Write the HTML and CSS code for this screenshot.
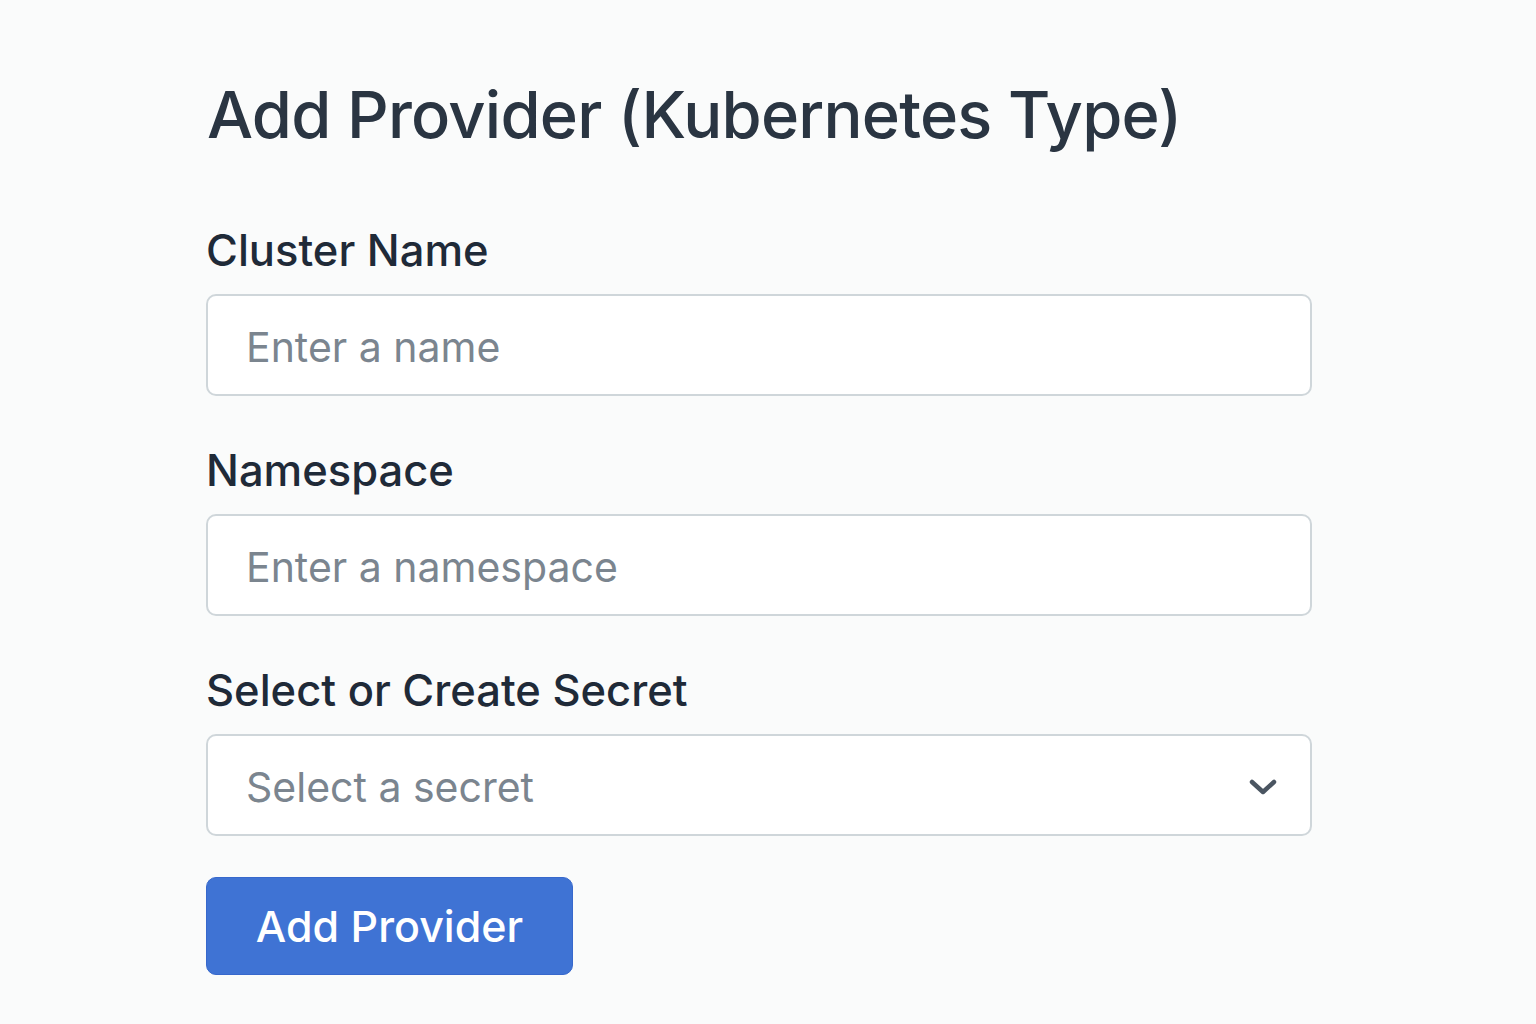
FILE: index.html
```html
<!DOCTYPE html>
<html lang="en">
<head>
<meta charset="utf-8">
<title>Add Provider</title>
<link rel="stylesheet" href="styles.css">
</head>
<body>
<main class="page">
  <h1 class="title">Add Provider (Kubernetes Type)</h1>
  <form class="form">
    <div class="field">
      <label class="label" for="cluster">Cluster Name</label>
      <input class="input" id="cluster" type="text" placeholder="Enter a name">
    </div>
    <div class="field">
      <label class="label" for="ns">Namespace</label>
      <input class="input" id="ns" type="text" placeholder="Enter a namespace">
    </div>
    <div class="field">
      <label class="label" for="secret">Select or Create Secret</label>
      <div class="select">
        <span class="select-text">Select a secret</span>
        <svg class="chevron" width="30" height="20" viewBox="0 0 30 20"><path d="M4 5 L15 15 L26 5" fill="none" stroke="#4a5561" stroke-width="4.5" stroke-linecap="round" stroke-linejoin="round"/></svg>
      </div>
    </div>
    <button class="button" type="button">Add Provider</button>
  </form>
</main>
</body>
</html>
```
FILE: styles.css
```css
* { box-sizing: border-box; }
html, body { margin: 0; padding: 0; }
body {
  background: #fafbfb;
  font-family: Inter, "Noto Sans", sans-serif;
  color: #243040;
}
.page {
  width: 1106px;
  margin-left: 206px;
  padding-top: 72px;
}
.title {
  margin: 0 0 0 1px;
  font-size: 65px;
  font-weight: 500;
  line-height: 86px;
  letter-spacing: -0.8px;
  color: #2a3542;
}
.form {
  display: flex;
  flex-direction: column;
  margin-top: 64px;
}
.field {
  display: flex;
  flex-direction: column;
  margin-bottom: 46px;
}
.field:last-of-type { margin-bottom: 41px; }
.label {
  font-size: 43.5px;
  font-weight: 500;
  line-height: 56px;
  margin: 0 0 16px 0;
  color: #1f2a38;
}
.input, .select {
  width: 1106px;
  height: 102px;
  border: 2px solid #cfd6da;
  border-radius: 10px;
  background: #ffffff;
  padding: 4px 38px 0;
  font-family: Inter, "Noto Sans", sans-serif;
  font-size: 41px;
  color: #7b858f;
  outline: none;
}
.input::placeholder { color: #7b858f; opacity: 1; }
.select {
  display: flex;
  align-items: center;
  justify-content: space-between;
  padding-right: 32px;
}
.chevron { display: block; }
.button {
  align-self: flex-start;
  width: 367px;
  height: 98px;
  border: 1px solid #3768cc;
  border-radius: 10px;
  background: #3f73d4;
  color: #ffffff;
  font-family: Inter, "Noto Sans", sans-serif;
  font-size: 43px;
  font-weight: 500;
  cursor: pointer;
}
```
